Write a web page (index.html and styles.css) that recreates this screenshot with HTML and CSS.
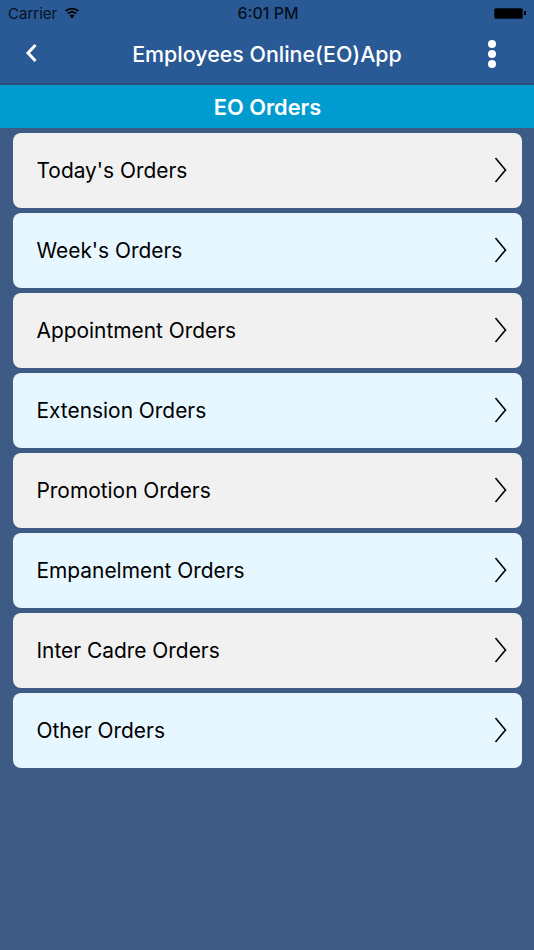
FILE: index.html
```html
<!DOCTYPE html>
<html lang="en">
<head>
<meta charset="utf-8">
<title>EO Orders</title>
<link rel="stylesheet" href="styles.css">
</head>
<body>
<div class="phone">
  <header class="topbar">
    <div class="status">
      <div class="status-left">
        <span>Carrier</span>
        <svg class="wifi" width="16" height="12" viewBox="0 0 16 12"><path d="M8 11.5 5.6 8.6a3.6 3.6 0 0 1 4.8 0zM4.4 7.3 3.2 5.9a7.2 7.2 0 0 1 9.6 0l-1.2 1.4a5.4 5.4 0 0 0-7.2 0zM2.2 4.7 1 3.3a10.6 10.6 0 0 1 14 0l-1.2 1.4a8.8 8.8 0 0 0-11.6 0z" fill="#000"/></svg>
      </div>
      <span class="time">6:01 PM</span>
      <div class="battery"><span class="battery-body"></span><span class="battery-tip"></span></div>
    </div>
    <div class="nav">
      <svg class="back" width="14" height="20" viewBox="0 0 14 20"><path d="M10.5 2 3 10l7.500 8" fill="none" stroke="#fff" stroke-width="3"/></svg>
      <h1 class="nav-title">Employees Online(EO)App</h1>
      <div class="dots"><span></span><span></span><span></span></div>
    </div>
  </header>
  <h2 class="subbar">EO Orders</h2>
  <ul class="list">
    <li class="row grey">Today's Orders<svg class="chev" width="14" height="26" viewBox="0 0 14 26"><path d="M1.500 1l10 12-10 12" fill="none" stroke="#000" stroke-width="1.6"/></svg></li>
    <li class="row blue">Week's Orders<svg class="chev" width="14" height="26" viewBox="0 0 14 26"><path d="M1.500 1l10 12-10 12" fill="none" stroke="#000" stroke-width="1.6"/></svg></li>
    <li class="row grey">Appointment Orders<svg class="chev" width="14" height="26" viewBox="0 0 14 26"><path d="M1.500 1l10 12-10 12" fill="none" stroke="#000" stroke-width="1.6"/></svg></li>
    <li class="row blue">Extension Orders<svg class="chev" width="14" height="26" viewBox="0 0 14 26"><path d="M1.500 1l10 12-10 12" fill="none" stroke="#000" stroke-width="1.6"/></svg></li>
    <li class="row grey">Promotion Orders<svg class="chev" width="14" height="26" viewBox="0 0 14 26"><path d="M1.500 1l10 12-10 12" fill="none" stroke="#000" stroke-width="1.6"/></svg></li>
    <li class="row blue">Empanelment Orders<svg class="chev" width="14" height="26" viewBox="0 0 14 26"><path d="M1.500 1l10 12-10 12" fill="none" stroke="#000" stroke-width="1.6"/></svg></li>
    <li class="row grey">Inter Cadre Orders<svg class="chev" width="14" height="26" viewBox="0 0 14 26"><path d="M1.500 1l10 12-10 12" fill="none" stroke="#000" stroke-width="1.6"/></svg></li>
    <li class="row blue">Other Orders<svg class="chev" width="14" height="26" viewBox="0 0 14 26"><path d="M1.500 1l10 12-10 12" fill="none" stroke="#000" stroke-width="1.6"/></svg></li>
  </ul>
</div>
</body>
</html>
```
FILE: styles.css
```css
* { box-sizing: border-box; }
html, body { margin: 0; padding: 0; }
body { background: #3e5b85; font-family: Inter, "Liberation Sans", sans-serif; }
.phone { width: 534px; height: 950px; overflow: hidden; background: #3e5b85; }
.topbar { height: 85px; background: #2a5a96; border-bottom: 2px solid #2d5078; }
.status { height: 28px; display: flex; align-items: center; justify-content: space-between; padding: 0 8px 2px; font-size: 15px; color: #06101f; position: relative; }
.status-left { display: flex; align-items: center; gap: 7px; }
.wifi { display: block; margin-top: -1px; }
.time { position: absolute; left: 0; right: 0; text-align: center; font-size: 16px; font-weight: 500; padding-left: 2px; }
.battery { display: flex; align-items: center; margin-left: auto; }
.battery-body { width: 29px; height: 11px; background: #000; border-radius: 2px; border: 1px solid #0b1a33; }
.battery-tip { width: 2px; height: 4px; background: #000; margin-left: 1px; }
.nav { height: 55px; display: flex; align-items: center; justify-content: space-between; padding: 0 38px 3px 25px; position: relative; }
.back { display: block; margin-top: -3px; }
.nav-title { position: absolute; left: 0; right: 0; margin: 0; text-align: center; color: #fff; font-size: 21.400px; font-weight: 500; }
.dots { display: flex; flex-direction: column; gap: 2px; margin-top: -1px; }
.dots span { display: block; width: 8px; height: 8px; border-radius: 50%; background: #fff; }
.subbar { height: 43px; margin: 0; background: #009ccf; color: #fff; font-size: 21.800px; font-weight: 600; display: flex; align-items: center; justify-content: center; padding-left: 1px; }
.list { list-style: none; margin: 0; padding: 5px 12px 0 13px; display: flex; flex-direction: column; gap: 5px; }
.row { height: 75px; border-radius: 8px; display: flex; align-items: center; justify-content: space-between; padding: 0 14px 0 23.500px; font-size: 20.900px; color: #000; line-height: 24px; }
.grey { background: #f1f1f1; }
.blue { background: #e7f7ff; }
.chev { display: block; transform: translateY(-1px); }
```
